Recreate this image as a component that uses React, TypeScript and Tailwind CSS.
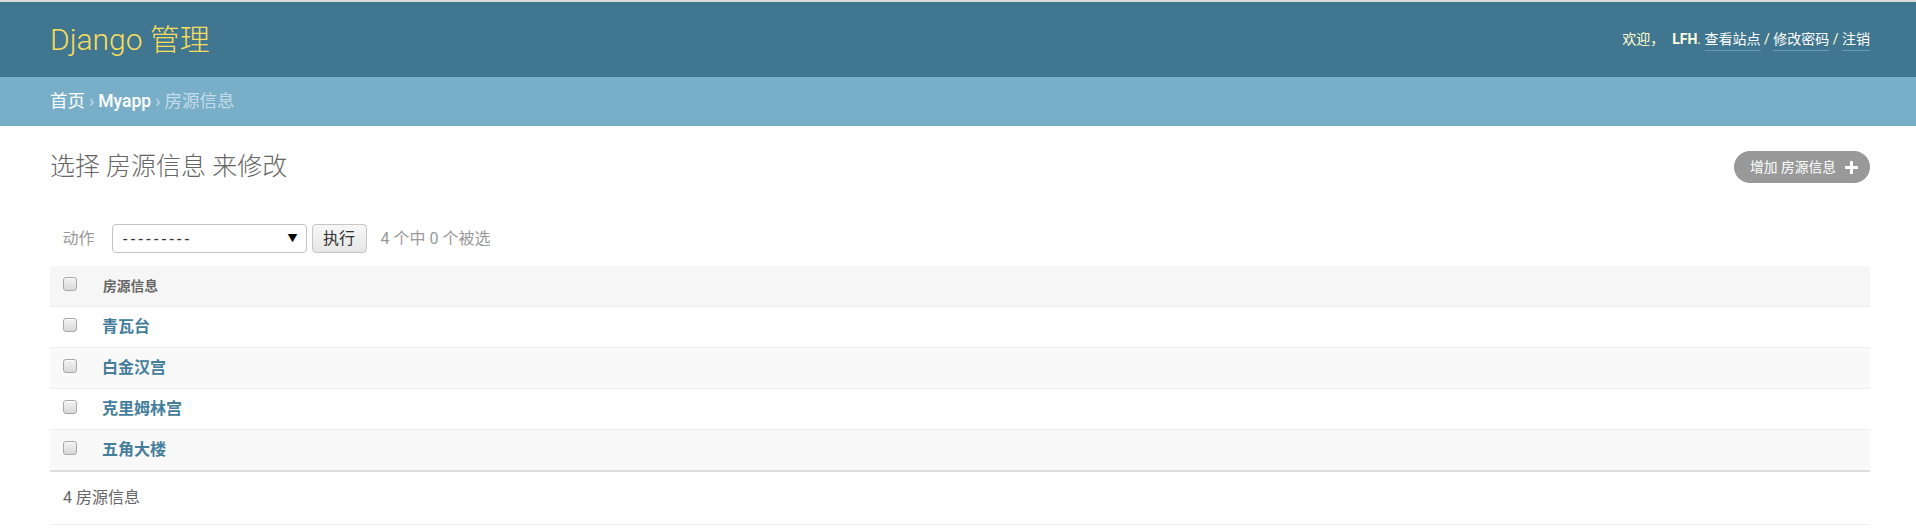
import React from "react"

const font = { fontFamily: 'Roboto, "Noto Sans CJK SC", sans-serif' }

const rows = ["青瓦台", "白金汉宫", "克里姆林宫", "五角大楼"]

function Checkbox() {
  return (
    <div className="w-[14px] h-[14px] rounded-[3px] border border-[#a8a8a8] bg-gradient-to-b from-[#f2f2f2] to-[#d9d9d9] shadow-[inset_0_1px_0_#fff]" />
  )
}

function PlusIcon() {
  return (
    <svg width="13" height="13" viewBox="0 0 13 13" className="ml-[9px]">
      <rect x="5" y="0" width="3" height="13" fill="#fff" />
      <rect x="0" y="5" width="13" height="3" fill="#fff" />
    </svg>
  )
}

export default function App() {
  return (
    <div className="min-h-screen bg-white" style={font}>
      <div className="h-[2px] bg-[#dcdcdc]" />

      {/* header */}
      <div className="h-[75px] pl-[50px] pr-[46px] flex items-center justify-between bg-[#417690]">
        <h1 className="text-[30px] font-light text-[#f5dd5d] leading-none">Django 管理</h1>
        <div className="text-[14px] text-[#ffc] flex items-center">
          <span>欢迎，</span>
          <strong className="ml-[8px] font-bold text-[#ffffe0]">LFH</strong>
          <span>.&nbsp;</span>
          <a className="text-white border-b border-white/25">查看站点</a>
          <span>&nbsp;/&nbsp;</span>
          <a className="text-white border-b border-white/25">修改密码</a>
          <span>&nbsp;/&nbsp;</span>
          <a className="text-white border-b border-white/25">注销</a>
        </div>
      </div>

      {/* breadcrumbs */}
      <div className="h-[49px] px-[50px] flex items-center bg-[#79aec8] text-[17.5px] text-[#c4dce8]">
        <a className="text-white">首页</a>
        <span className="mx-[4px]">›</span>
        <a className="text-white font-medium">Myapp</a>
        <span className="mx-[4px]">›</span>
        <span>房源信息</span>
      </div>

      {/* content */}
      <div className="pl-[50px] pr-[46px] pt-[25px]">
        <div className="h-[32px] flex items-center justify-between">
          <h1 className="text-[25px] font-light text-[#666]">选择 房源信息 来修改</h1>
          <a className="h-[32px] pl-[16px] pr-[12px] rounded-full bg-[#999] text-white text-[13.75px] flex items-center">
            增加 房源信息
            <PlusIcon />
          </a>
        </div>

        <div className="mt-[28px] h-[55px] px-[12.5px] flex items-center text-[16px] text-[#999]">
          <span>动作</span>
          <div className="ml-[17px] w-[195px] h-[29px] rounded-[4px] border border-[#c3c3c3] bg-white flex items-center justify-between pl-[10px] pr-[8px] text-[#333]">
            <span className="tracking-[2.4px]" style={{ fontFamily: '"Liberation Sans", sans-serif' }}>---------</span>
            <span className="text-[10px] text-black">▼</span>
          </div>
          <button className="ml-[5px] w-[55px] h-[29px] rounded-[4px] border border-[#c6c6c6] bg-gradient-to-b from-[#f7f7f7] to-[#e6e6e6] text-[#333] text-[16px]">
            执行
          </button>
          <span className="ml-[14px]">4 个中 0 个被选</span>
        </div>

        <div className="h-[41px] flex items-center bg-[#f6f6f6] border-b border-[#eee]">
          <div className="w-[53px] pl-[13px] -mt-[4px]">
            <Checkbox />
          </div>
          <span className="text-[13.75px] font-bold text-[#666]">房源信息</span>
        </div>

        {rows.map((r, i) => (
          <div
            key={r}
            className={`h-[41px] flex items-center border-b ${
              i === rows.length - 1 ? "border-b-2 border-[#ddd] h-[42px]" : "border-[#eee]"
            } ${i % 2 === 1 ? "bg-[#f9f9f9]" : "bg-white"}`}
          >
            <div className="w-[52px] pl-[13px] -mt-[5px]">
              <Checkbox />
            </div>
            <a className="text-[16px] font-bold text-[#447e9b]">{r}</a>
          </div>
        ))}

        <div className="h-[53px] px-[13px] flex items-center border-b border-[#eee] text-[16px] text-[#666]">
          4 房源信息
        </div>
      </div>
    </div>
  )
}
